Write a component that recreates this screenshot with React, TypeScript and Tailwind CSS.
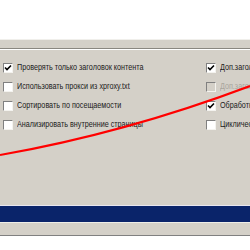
import * as React from "react"

type Opt = { label: string; checked?: boolean; disabled?: boolean }

const leftOpts: Opt[] = [
  { label: "Проверять только заголовок контента", checked: true },
  { label: "Использовать прокси из xproxy.txt" },
  { label: "Сортировать по посещаемости" },
  { label: "Анализировать внутренние страницы" },
]

const rightOpts: Opt[] = [
  { label: "Доп.заголовки", checked: true },
  { label: "Доп.заголовки", disabled: true },
  { label: "Обработка", checked: true },
  { label: "Циклически" },
]

function CheckBox({ checked, disabled }: { checked?: boolean; disabled?: boolean }) {
  return (
    <div
      className={
        "w-[10px] h-[10px] shrink-0 border border-t-[#808080] border-l-[#808080] border-b-[#f4f3ef] border-r-[#f4f3ef] flex items-center justify-center " +
        (disabled ? "bg-[#d4d0c8]" : "bg-white")
      }
    >
      {checked && (
        <svg width="8" height="8" viewBox="0 0 8 8">
          <path d="M1 3.5 L3 5.5 L7 1.5" stroke="#000" strokeWidth="1.6" fill="none" />
        </svg>
      )}
    </div>
  )
}

function Row({ opt }: { opt: Opt }) {
  return (
    <div className="h-[19px] flex items-center gap-[4px] whitespace-nowrap">
      <CheckBox checked={opt.checked} disabled={opt.disabled} />
      <span
        className={
          "text-[9px] leading-none origin-left scale-x-[0.8] " +
          (opt.disabled ? "text-[#a8a59c]" : "text-[#1a1a1a]")
        }
      >
        {opt.label}
      </span>
    </div>
  )
}

export default function App() {
  return (
    <div
      className="relative w-[250px] h-[250px] bg-white overflow-hidden"
      style={{ fontFamily: '"Liberation Sans", Arial, sans-serif' }}
    >
      <div className="h-[39px] bg-white" />

      {/* Options panel */}
      <div className="bg-[#d4d0c8] border-t border-[#f0efeb]">
        <div className="h-[8px]" />
        <div className="h-px bg-[#8a8780]" />
        <div className="h-px bg-white" />

        <div className="pt-[8px] flex">
          <div className="w-[206px] shrink-0 pl-[3px] flex flex-col">
            {leftOpts.map((o) => (
              <Row key={o.label} opt={o} />
            ))}
          </div>
          <div className="flex flex-col min-w-0">
            {rightOpts.map((o, i) => (
              <Row key={i} opt={o} />
            ))}
          </div>
        </div>

        <div className="h-[71px]" />
        <div className="h-px bg-[#e8e6f0]" />
        <div className="h-[16px] bg-[#0a246a]" />
        <div className="h-px bg-[#eeede8]" />
        <div className="h-[12px]" />
        <div className="h-px bg-[#808080]" />
      </div>

      {/* Red annotation stroke */}
      <svg
        className="absolute inset-0 pointer-events-none"
        width="250"
        height="250"
        viewBox="0 0 250 250"
      >
        <path d="M0 155 Q 125 133 250 86" stroke="#ff0000" strokeWidth="2.2" fill="none" />
      </svg>
    </div>
  )
}
